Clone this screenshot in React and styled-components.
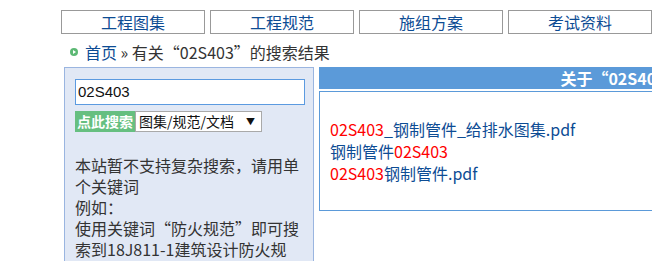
import styled, { createGlobalStyle } from "styled-components";

const GlobalStyle = createGlobalStyle`
  html, body {
    margin: 0;
    padding: 0;
    overflow: hidden;
    background: #fff;
    font-family: "Noto Sans CJK SC", "Liberation Sans", sans-serif;
  }
`;

const Page = styled.div`
  width: 1100px;
  padding: 10px 0 0 61px;
`;

const Nav = styled.div`
  display: flex;
  gap: 5px;
`;

const NavButton = styled.a`
  width: 142px;
  height: 22px;
  border: 1px solid #999;
  display: flex;
  align-items: center;
  justify-content: center;
  font-size: 16px;
  color: #0d4c94;
  text-decoration: none;
`;

const Crumbs = styled.div`
  display: flex;
  align-items: center;
  height: 22px;
  margin: 7px 0 0 9px;
  font-size: 16px;
  color: #333;
  gap: 7px;
`;

const Dot = styled.span`
  width: 8px;
  height: 8px;
  border-radius: 50%;
  background: #5cb874;
  display: flex;
  align-items: center;
  justify-content: center;
  &::after {
    content: "";
    border-left: 3px solid #fff;
    border-top: 2px solid transparent;
    border-bottom: 2px solid transparent;
    margin-left: 1px;
  }
`;

const HomeLink = styled.a`
  color: #0d4c94;
  text-decoration: none;
`;

const Main = styled.div`
  display: flex;
  gap: 5px;
  margin: 4px 0 0 3px;
  align-items: flex-start;
`;

const Side = styled.div`
  width: 228px;
  height: 240px;
  background: #e1e8f5;
  border: 1px solid #9ab5e0;
  padding: 10px 10px 0;
`;

const SearchInput = styled.input`
  box-sizing: border-box;
  width: 230px;
  height: 26px;
  border: 1px solid #5b9ae0;
  padding: 0 2px;
  font-family: "Liberation Sans", "Noto Sans CJK SC", sans-serif;
  font-size: 15px;
  color: #111;
  outline: none;
`;

const SearchRow = styled.div`
  display: flex;
  margin-top: 6px;
  height: 21px;
`;

const GoButton = styled.button`
  width: 60px;
  height: 21px;
  border: none;
  padding: 0;
  background: #66bf80;
  color: #fff;
  font-family: "Noto Sans CJK SC", sans-serif;
  font-weight: bold;
  font-size: 14px;
`;

const SelectBox = styled.div`
  box-sizing: border-box;
  width: 127px;
  height: 21px;
  background: #fff;
  border: 1px solid #a9a9a9;
  display: flex;
  align-items: center;
  justify-content: space-between;
  padding: 0 6px 0 3px;
  font-size: 14px;
  color: #111;
  & > span {
    font-size: 9px;
  }
`;

const Tips = styled.div`
  width: 227px;
  margin-top: 23px;
  font-size: 16px;
  line-height: 21px;
  color: #333;
`;

const Results = styled.div`
  width: 684px;
`;

const ResultsHead = styled.div`
  height: 22px;
  background: #5b9ad9;
  color: #fff;
  font-weight: bold;
  font-size: 16px;
  display: flex;
  align-items: center;
  justify-content: center;
`;

const ResultsBox = styled.div`
  margin-top: 2px;
  height: 118px;
  border: 1px solid #5b9ad9;
  padding: 0 10px;
  display: flex;
  flex-direction: column;
  justify-content: center;
  font-size: 16px;
  line-height: 22px;
`;

const ResultLink = styled.a`
  color: #0d4c94;
  text-decoration: none;
  & > em {
    font-style: normal;
    color: #ff0000;
  }
`;

const results = [
  ["", "02S403", "_钢制管件_给排水图集.pdf"],
  ["钢制管件", "02S403", ""],
  ["", "02S403", "钢制管件.pdf"],
];

const navItems = ["工程图集", "工程规范", "施组方案", "考试资料"];

export default function App() {
  return (
    <Page>
      <GlobalStyle />
      <Nav>
        {navItems.map((n) => (
          <NavButton key={n}>{n}</NavButton>
        ))}
      </Nav>
      <Crumbs>
        <Dot />
        <span>
          <HomeLink>首页</HomeLink> » 有关“02S403”的搜索结果
        </span>
      </Crumbs>
      <Main>
        <Side>
          <SearchInput defaultValue="02S403" />
          <SearchRow>
            <GoButton>点此搜索</GoButton>
            <SelectBox>
              图集/规范/文档<span>▼</span>
            </SelectBox>
          </SearchRow>
          <Tips>
            本站暂不支持复杂搜索，请用单个关键词
            <br />
            例如：
            <br />
            使用关键词“防火规范”即可搜索到18J811-1建筑设计防火规范
          </Tips>
        </Side>
        <Results>
          <ResultsHead>关于“02S403”的搜索结果</ResultsHead>
          <ResultsBox>
            {results.map(([a, b, c], i) => (
              <div key={i}>
                <ResultLink>
                  {a}
                  <em>{b}</em>
                  {c}
                </ResultLink>
              </div>
            ))}
          </ResultsBox>
        </Results>
      </Main>
    </Page>
  );
}
